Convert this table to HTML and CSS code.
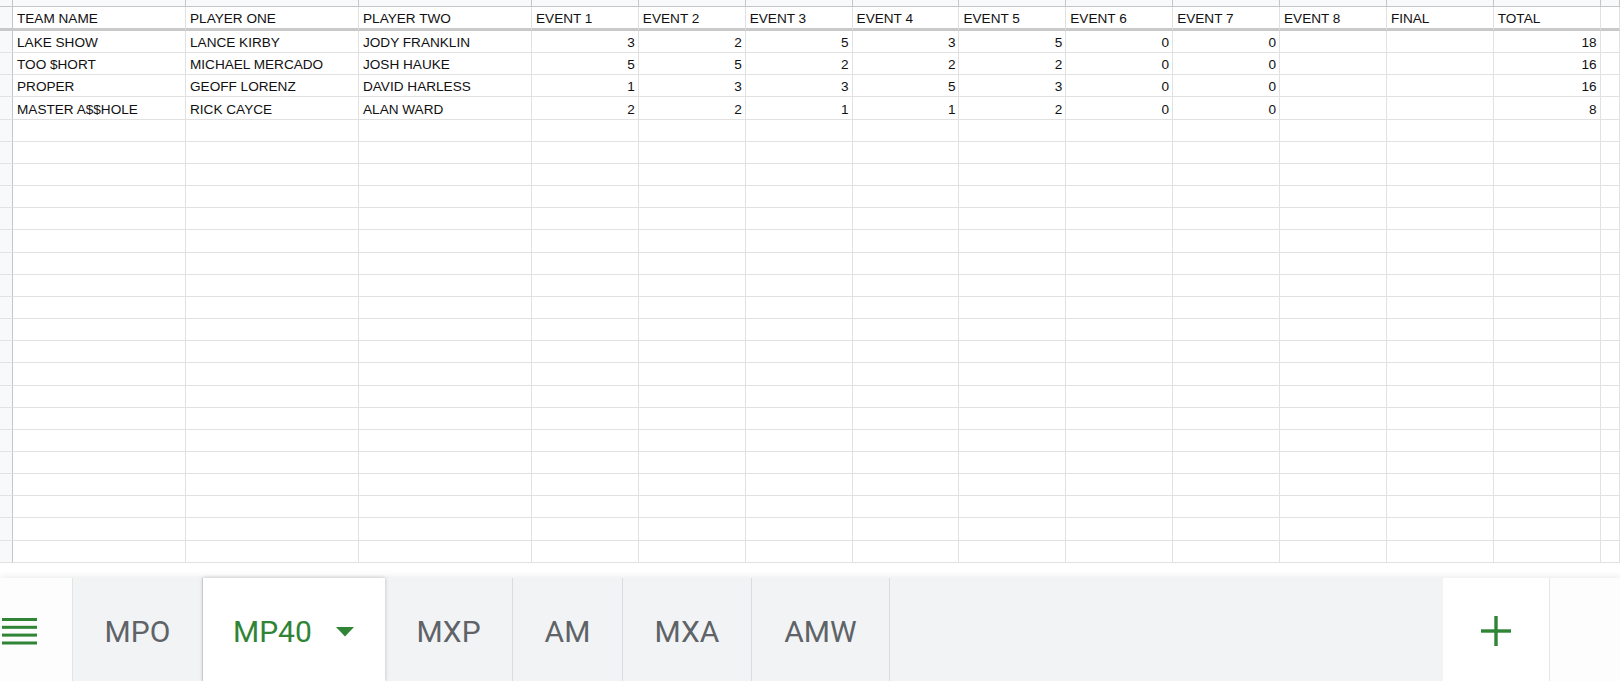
FILE: index.html
```html
<!DOCTYPE html>
<html lang="en">
<head>
<meta charset="utf-8">
<title>Standings - MP40</title>
<link rel="stylesheet" href="styles.css">
</head>
<body>
<div class="grid">
  <div class="ch"></div><div class="ch"></div><div class="ch"></div><div class="ch"></div><div class="ch"></div><div class="ch"></div><div class="ch"></div><div class="ch"></div><div class="ch"></div><div class="ch"></div><div class="ch"></div><div class="ch"></div><div class="ch"></div><div class="ch"></div><div class="ch"></div>

  <div class="rh hd"></div><div class="hd">TEAM NAME</div><div class="hd">PLAYER ONE</div><div class="hd">PLAYER TWO</div><div class="hd">EVENT 1</div><div class="hd">EVENT 2</div><div class="hd">EVENT 3</div><div class="hd">EVENT 4</div><div class="hd">EVENT 5</div><div class="hd">EVENT 6</div><div class="hd">EVENT 7</div><div class="hd">EVENT 8</div><div class="hd">FINAL</div><div class="hd">TOTAL</div><div class="hd"></div>

  <div class="rh"></div><div>LAKE SHOW</div><div>LANCE KIRBY</div><div>JODY FRANKLIN</div><div class="n">3</div><div class="n">2</div><div class="n">5</div><div class="n">3</div><div class="n">5</div><div class="n">0</div><div class="n">0</div><div></div><div></div><div class="n">18</div><div></div>
  <div class="rh"></div><div>TOO $HORT</div><div>MICHAEL MERCADO</div><div>JOSH HAUKE</div><div class="n">5</div><div class="n">5</div><div class="n">2</div><div class="n">2</div><div class="n">2</div><div class="n">0</div><div class="n">0</div><div></div><div></div><div class="n">16</div><div></div>
  <div class="rh"></div><div>PROPER</div><div>GEOFF LORENZ</div><div>DAVID HARLESS</div><div class="n">1</div><div class="n">3</div><div class="n">3</div><div class="n">5</div><div class="n">3</div><div class="n">0</div><div class="n">0</div><div></div><div></div><div class="n">16</div><div></div>
  <div class="rh"></div><div>MASTER A$$HOLE</div><div>RICK CAYCE</div><div>ALAN WARD</div><div class="n">2</div><div class="n">2</div><div class="n">1</div><div class="n">1</div><div class="n">2</div><div class="n">0</div><div class="n">0</div><div></div><div></div><div class="n">8</div><div></div>

  <div class="rh"></div><div></div><div></div><div></div><div></div><div></div><div></div><div></div><div></div><div></div><div></div><div></div><div></div><div></div><div></div>
  <div class="rh"></div><div></div><div></div><div></div><div></div><div></div><div></div><div></div><div></div><div></div><div></div><div></div><div></div><div></div><div></div>
  <div class="rh"></div><div></div><div></div><div></div><div></div><div></div><div></div><div></div><div></div><div></div><div></div><div></div><div></div><div></div><div></div>
  <div class="rh"></div><div></div><div></div><div></div><div></div><div></div><div></div><div></div><div></div><div></div><div></div><div></div><div></div><div></div><div></div>
  <div class="rh"></div><div></div><div></div><div></div><div></div><div></div><div></div><div></div><div></div><div></div><div></div><div></div><div></div><div></div><div></div>
  <div class="rh"></div><div></div><div></div><div></div><div></div><div></div><div></div><div></div><div></div><div></div><div></div><div></div><div></div><div></div><div></div>
  <div class="rh"></div><div></div><div></div><div></div><div></div><div></div><div></div><div></div><div></div><div></div><div></div><div></div><div></div><div></div><div></div>
  <div class="rh"></div><div></div><div></div><div></div><div></div><div></div><div></div><div></div><div></div><div></div><div></div><div></div><div></div><div></div><div></div>
  <div class="rh"></div><div></div><div></div><div></div><div></div><div></div><div></div><div></div><div></div><div></div><div></div><div></div><div></div><div></div><div></div>
  <div class="rh"></div><div></div><div></div><div></div><div></div><div></div><div></div><div></div><div></div><div></div><div></div><div></div><div></div><div></div><div></div>
  <div class="rh"></div><div></div><div></div><div></div><div></div><div></div><div></div><div></div><div></div><div></div><div></div><div></div><div></div><div></div><div></div>
  <div class="rh"></div><div></div><div></div><div></div><div></div><div></div><div></div><div></div><div></div><div></div><div></div><div></div><div></div><div></div><div></div>
  <div class="rh"></div><div></div><div></div><div></div><div></div><div></div><div></div><div></div><div></div><div></div><div></div><div></div><div></div><div></div><div></div>
  <div class="rh"></div><div></div><div></div><div></div><div></div><div></div><div></div><div></div><div></div><div></div><div></div><div></div><div></div><div></div><div></div>
  <div class="rh"></div><div></div><div></div><div></div><div></div><div></div><div></div><div></div><div></div><div></div><div></div><div></div><div></div><div></div><div></div>
  <div class="rh"></div><div></div><div></div><div></div><div></div><div></div><div></div><div></div><div></div><div></div><div></div><div></div><div></div><div></div><div></div>
  <div class="rh"></div><div></div><div></div><div></div><div></div><div></div><div></div><div></div><div></div><div></div><div></div><div></div><div></div><div></div><div></div>
  <div class="rh"></div><div></div><div></div><div></div><div></div><div></div><div></div><div></div><div></div><div></div><div></div><div></div><div></div><div></div><div></div>
  <div class="rh"></div><div></div><div></div><div></div><div></div><div></div><div></div><div></div><div></div><div></div><div></div><div></div><div></div><div></div><div></div>
  <div class="rh"></div><div></div><div></div><div></div><div></div><div></div><div></div><div></div><div></div><div></div><div></div><div></div><div></div><div></div><div></div>
</div>

<div class="tabs">
  <div class="tab menu">
    <svg class="hamb" width="35" height="27" viewBox="0 0 35 27"><rect x="0" y="0" width="35" height="3"/><rect x="0" y="7.8" width="35" height="3"/><rect x="0" y="15.6" width="35" height="3"/><rect x="0" y="23.5" width="35" height="3"/></svg>
  </div>
  <div class="tab w130">MPO</div>
  <div class="tab active"><span>MP40</span><svg class="caret" width="18" height="10" viewBox="0 0 18 10"><polygon points="0,0 18,0 9,9.5"/></svg></div>
  <div class="tab w128">MXP</div>
  <div class="tab w110">AM</div>
  <div class="tab w129">MXA</div>
  <div class="tab w138">AMW</div>
  <div class="spacer"></div>
  <div class="add"><svg width="30" height="30" viewBox="0 0 30 30"><rect x="13.3" y="0" width="3.4" height="30"/><rect x="0" y="13.3" width="30" height="3.4"/></svg></div>
  <div class="rest"></div>
</div>
</body>
</html>
```
FILE: styles.css
```css
* { box-sizing: border-box; }

html, body {
  margin: 0;
  padding: 0;
  background: #fff;
}

body {
  width: 1620px;
  height: 681px;
  overflow: hidden;
  font-family: "Liberation Sans", Arial, Helvetica, sans-serif;
}

.grid {
  display: grid;
  grid-template-columns: 13px 173px 173px 173px repeat(10, 106.87px) 1fr;
  grid-template-rows: 7px 24px;
  grid-auto-rows: 22.17px;
  height: 578px;
  overflow: hidden;
  font-size: 13.6px;
  line-height: 16px;
  color: #111;
}

.grid > div {
  border-right: 1px solid #e1e1e1;
  border-bottom: 1px solid #e1e1e1;
  display: flex;
  align-items: flex-end;
  padding: 0 3px 1px 4px;
  white-space: nowrap;
  overflow: hidden;
}

.grid > .ch {
  background: #f8f9fa;
  border-right-color: #c4c7c5;
  border-bottom-color: #c4c7c5;
}

.grid > .rh {
  background: #f8f9fa;
  border-right-color: #c4c7c5;
  border-bottom-color: #e3e3e3;
}

.grid > .hd {
  border-bottom: 3px solid #c9c9c9;
}

.grid > .n {
  justify-content: flex-end;
}

.tabs {
  display: flex;
  height: 103px;
  background: #f1f3f4;
  box-shadow: 0 -2px 6px rgba(0, 0, 0, 0.07);
  position: relative;
}

.tab {
  display: flex;
  align-items: center;
  justify-content: center;
  padding-top: 3px;
  font-family: Roboto, "Open Sans", sans-serif;
  font-weight: 400;
  font-size: 30px;
  color: #5f6368;
  border-right: 1px solid #dadce0;
  flex: 0 0 auto;
}

.menu {
  width: 73px;
  background: #fdfdfd;
  justify-content: flex-start;
  padding-left: 2px;
  border-right-color: #e4e4e4;
}

.hamb { fill: #2f8436; display: block; }

.w130 { width: 130px; }
.w128 { width: 128px; }
.w110 { width: 110px; }
.w129 { width: 129px; }
.w138 { width: 138px; }

.active {
  width: 182px;
  background: #fff;
  color: #2f8436;
  justify-content: flex-start;
  padding-left: 30px;
  gap: 24px;
  border-right: none;
  box-shadow: 0 0 4px rgba(0, 0, 0, 0.22);
  position: relative;
  z-index: 1;
}

.caret { fill: #2f8436; display: block; margin-top: 1px; }

.spacer { flex: 1 1 auto; }

.add {
  flex: 0 0 107px;
  background: #fff;
  border-right: 1px solid #e6e6e6;
  display: flex;
  align-items: center;
  justify-content: center;
  padding-top: 3px;
}

.add svg { fill: #2f8436; display: block; }

.rest {
  flex: 0 0 70px;
  background: #fdfdfd;
}
```
